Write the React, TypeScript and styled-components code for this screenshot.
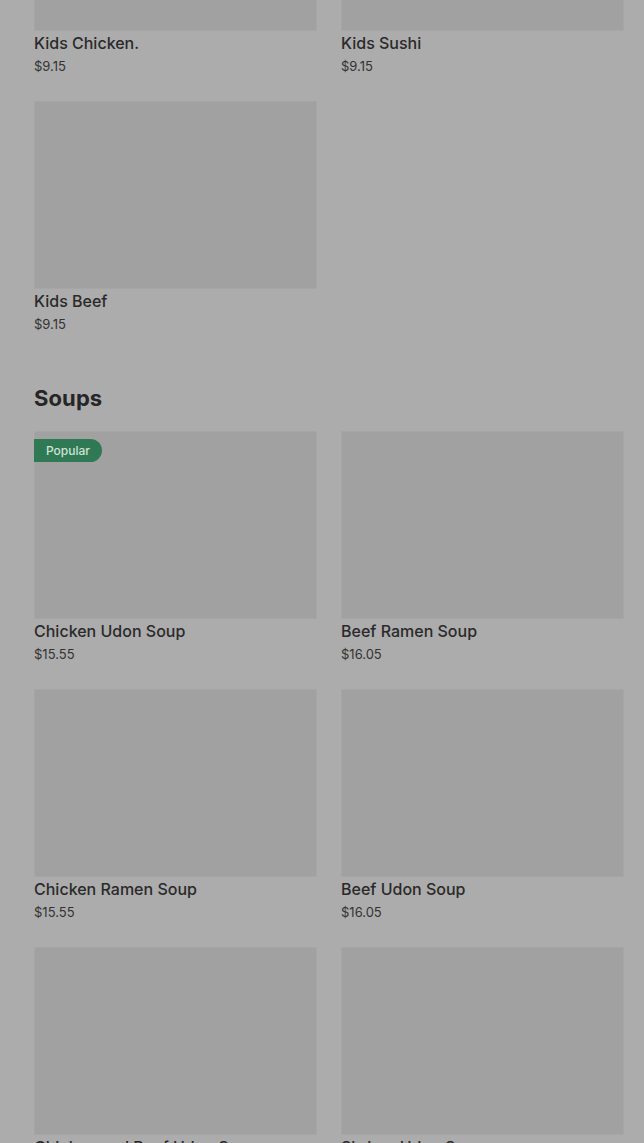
import React from "react";
import styled, { createGlobalStyle } from "styled-components";

const Global = createGlobalStyle`
  html, body {
    margin: 0;
    padding: 0;
    background: #acacac;
    overflow: hidden;
  }
  body {
    font-family: Inter, "Noto Sans", Arial, sans-serif;
    -webkit-font-smoothing: antialiased;
  }
`;

const Page = styled.main`
  margin-top: -157px;
  padding: 0 20px 0 34px;
  display: flex;
  flex-direction: column;
`;

const Section = styled.section`
  display: flex;
  flex-direction: column;
  & + & {
    margin-top: 51px;
  }
`;

const SectionTitle = styled.h2`
  margin: 0 0 19px;
  font-size: 22px;
  line-height: 28px;
  font-weight: 700;
  color: #262626;
  letter-spacing: 0.1px;
`;

const Grid = styled.div`
  display: grid;
  grid-template-columns: 283px 283px;
  column-gap: 24px;
  row-gap: 26px;
`;

const Card = styled.article`
  display: flex;
  flex-direction: column;
`;

const Thumb = styled.div`
  position: relative;
  height: 188px;
  background: #a1a1a1;
  box-shadow: inset 0 0 0 1px #a6a6a6;
`;

const Badge = styled.span`
  position: absolute;
  top: 8px;
  left: 0;
  height: 23px;
  padding: 0 12px;
  display: flex;
  align-items: center;
  background: #2f7a54;
  color: #cfe2d6;
  font-size: 12px;
  font-weight: 500;
  border-radius: 0 12px 12px 0;
`;

const Name = styled.div`
  margin-top: 2px;
  font-size: 16px;
  line-height: 20px;
  font-weight: 500;
  color: #2a2a2a;
`;

const Price = styled.div`
  margin-top: 4px;
  font-size: 13px;
  line-height: 18px;
  font-weight: 400;
  color: #333333;
`;

type Item = { name: string; price: string; popular?: boolean };

const kids: Item[] = [
  { name: "Kids Chicken.", price: "$9.15" },
  { name: "Kids Sushi", price: "$9.15" },
  { name: "Kids Beef", price: "$9.15" },
];

const soups: Item[] = [
  { name: "Chicken Udon Soup", price: "$15.55", popular: true },
  { name: "Beef Ramen Soup", price: "$16.05" },
  { name: "Chicken Ramen Soup", price: "$15.55" },
  { name: "Beef Udon Soup", price: "$16.05" },
  { name: "Chicken and Beef Udon Soup", price: "$16.55" },
  { name: "Shrimp Udon Soup", price: "$16.55" },
];

const MenuCard = ({ item }: { item: Item }) => (
  <Card>
    <Thumb>{item.popular && <Badge>Popular</Badge>}</Thumb>
    <Name>{item.name}</Name>
    <Price>{item.price}</Price>
  </Card>
);

export default function App() {
  return (
    <>
      <Global />
      <Page>
        <Section>
          <Grid>
            {kids.map((it) => (
              <MenuCard key={it.name} item={it} />
            ))}
          </Grid>
        </Section>
        <Section>
          <SectionTitle>Soups</SectionTitle>
          <Grid>
            {soups.map((it) => (
              <MenuCard key={it.name} item={it} />
            ))}
          </Grid>
        </Section>
      </Page>
    </>
  );
}
